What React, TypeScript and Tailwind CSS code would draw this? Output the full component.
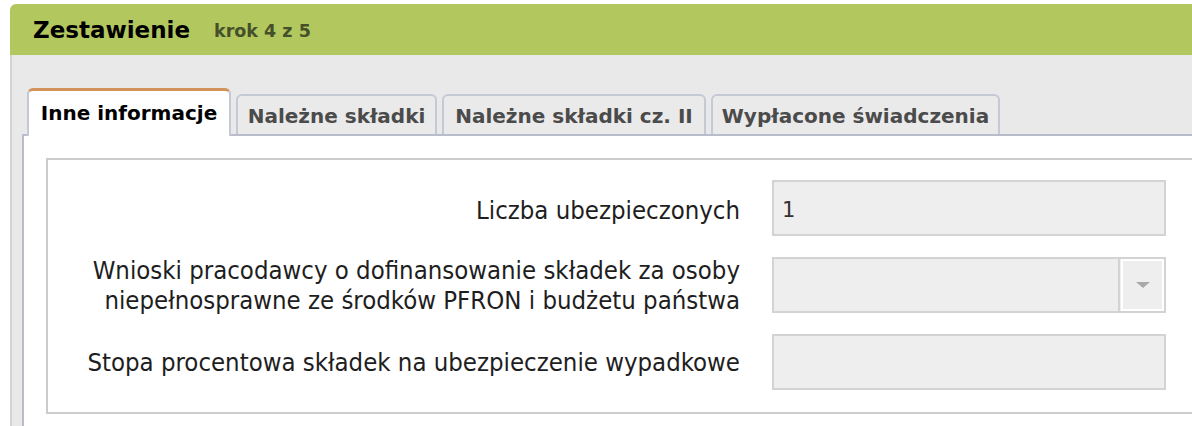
const tabs = [
  { label: 'Inne informacje', width: 'w-[204px]', active: true },
  { label: 'Należne składki', width: 'w-[201px]', active: false },
  { label: 'Należne składki cz. II', width: 'w-[264px]', active: false },
  { label: 'Wypłacone świadczenia', width: 'w-[289px]', active: false },
]

function Field({ value, select }: { value?: string; select?: boolean }) {
  return (
    <div className="flex h-[56px] w-[394px] border-2 border-[#d3d3d3] bg-[#eeeeee]">
      <div className="flex flex-1 items-center pl-[8px] pt-[3px] font-['DejaVu_Sans',sans-serif] text-[21px] text-[#333]">
        {value}
      </div>
      {select && (
        <div className="flex w-[46px] border-l-2 border-[#d3d3d3] pl-[1px]">
          <div className="flex flex-1 items-center justify-center border-2 border-white bg-[#eeeeee]">
            <span className="block h-0 w-0 border-x-[7px] border-t-[6px] border-x-transparent border-t-[#a9a9a9] blur-[0.4px]" />
          </div>
        </div>
      )}
    </div>
  )
}

export default function App() {
  return (
    <div className="h-[426px] w-[1192px] overflow-hidden bg-white pt-[4px] pl-[10px]">
      <div className="w-[1240px] overflow-hidden rounded-tl-[6px]">
        <div className="flex h-[51px] items-center gap-[24px] bg-[#b2c85e] pl-[23px] pt-[1px] font-['DejaVu_Sans',sans-serif] font-bold">
          <span className="text-[23px] text-black">Zestawienie</span>
          <span className="pt-[3px] text-[17.5px] text-[#45502a]">krok 4 z 5</span>
        </div>

        <div className="border-l-2 border-[#d4d4d4] bg-[#e9e9e9] pl-[10px] pt-[33px]">
          <div className="flex items-end gap-[5px] border-b-2 border-[#b9bdcb] pl-[5px] font-['DejaVu_Sans',sans-serif] text-[20px] font-bold">
            {tabs.map((t) =>
              t.active ? (
                <div
                  key={t.label}
                  className={`relative z-10 -mb-[2px] flex h-[48px] items-center justify-center rounded-t-[6px] border-x-2 border-t-[3px] border-x-[#c5c9d5] border-t-[#d3935a] bg-white pb-[2px] text-black ${t.width}`}
                >
                  {t.label}
                </div>
              ) : (
                <div
                  key={t.label}
                  className={`flex h-[40px] items-center justify-center rounded-t-[6px] border-x-2 border-t-2 border-[#c5c9d5] bg-[#eaeaea] pt-[2px] text-[#4b4b4b] ${t.width}`}
                >
                  {t.label}
                </div>
              ),
            )}
          </div>

          <div className="h-[300px] border-l-2 border-[#b9bdcb] bg-white pl-[22px] pt-[22px]">
            <div className="border-2 border-[#cccccc] pb-[22px] pt-[20px]">
              <div className="grid grid-cols-[692px_394px] items-center gap-x-[32px] gap-y-[19px] font-['DejaVu_Sans_Condensed','DejaVu_Sans',sans-serif] text-[25.5px] leading-[30px] text-[#1e1e1e]">
                <div className="pt-[4px] text-right">Liczba ubezpieczonych</div>
                <Field value="1" />
                <div className="text-right">
                  Wnioski pracodawcy o dofinansowanie składek za osoby
                  <br />
                  niepełnosprawne ze środków PFRON i budżetu państwa
                </div>
                <Field select />
                <div className="text-right">Stopa procentowa składek na ubezpieczenie wypadkowe</div>
                <Field />
              </div>
            </div>
          </div>
        </div>
      </div>
    </div>
  )
}
